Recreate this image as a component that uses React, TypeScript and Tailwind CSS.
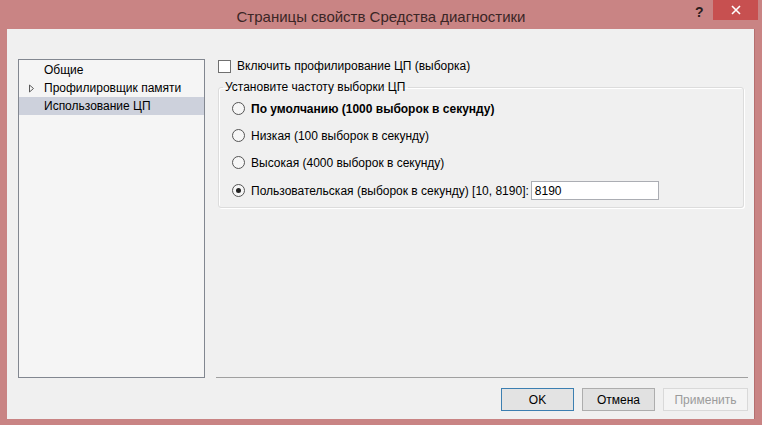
export default function App() {
  const font = { fontFamily: '"Liberation Sans", Arial, sans-serif' };
  return (
    <div
      className="w-[762px] h-[425px] bg-[#c98484] flex flex-col text-[12px] text-black overflow-hidden"
      style={font}
    >
      {/* Title bar */}
      <div className="h-[29px] flex items-start relative shrink-0">
        <div className="flex-1 text-center text-[15px] text-[#3b2626] pt-[6px]">
          Страницы свойств Средства диагностики
        </div>
        <div className="absolute left-[695px] top-[2px] text-[#2b1d1d] font-bold text-[14px]">?</div>
        <div className="absolute right-[4px] top-0 w-[45px] h-[20px] bg-[#c75050] flex items-center justify-center">
          <svg width="10" height="10" viewBox="0 0 10 10">
            <path d="M1 1 L9 9 M9 1 L1 9" stroke="white" strokeWidth="1.6" />
          </svg>
        </div>
      </div>

      {/* Client */}
      <div className="flex-1 mx-[7px] mb-[6px] bg-[#f0f0f0] border-r border-[#b56f6f] flex flex-col">
        <div className="flex pt-[30px] pl-[11px]">
          {/* Tree */}
          <div className="w-[187px] h-[319px] border border-[#828790] bg-[#f5f5f5] pt-[1px] shrink-0">
            <div className="h-[18px] flex items-center pl-[25px]">Общие</div>
            <div className="h-[18px] flex items-center pl-[9px]">
              <svg width="8" height="9" viewBox="0 0 8 9" className="mr-[8px]">
                <path d="M1.5 1 L5.5 4.5 L1.5 8 Z" fill="none" stroke="#595959" strokeWidth="1" />
              </svg>
              Профилировщик памяти
            </div>
            <div className="h-[18px] flex items-center pl-[25px] bg-[#cdd1dc]">Использование ЦП</div>
          </div>

          {/* Right panel */}
          <div className="flex-1 ml-[11px] mr-[6px] h-[319px] border-b border-[#a0a0a0] flex flex-col">
            <div className="flex items-center h-[14px] ml-[2px]">
              <div className="w-[13px] h-[13px] border border-[#707070] bg-white mr-[6px]" />
              <span>Включить профилирование ЦП (выборка)</span>
            </div>

            <fieldset className="mt-[7px] ml-[2px] mr-[4px] border border-[#dcdcdc] rounded-[3px] shadow-[inset_1px_1px_0_#ffffff,1px_1px_0_#ffffff] h-[128px]">
              <legend className="ml-[4px] pl-[2px] pr-[3px] leading-[14px]">Установите частоту выборки ЦП</legend>
              <div className="flex flex-col gap-[12px] mt-[7px] pl-[13px]">
                <Radio label="По умолчанию (1000 выборок в секунду)" bold />
                <Radio label="Низкая (100 выборок в секунду)" />
                <Radio label="Высокая (4000 выборок в секунду)" />
                <div className="flex items-center h-[15px] mt-[1px]">
                  <Circle checked />
                  <span>Пользовательская (выборок в секунду) [10, 8190]:</span>
                  <div className="ml-[2px] w-[128px] h-[19px] border border-[#abadb3] bg-white flex items-center pl-[3px]">
                    8190
                  </div>
                </div>
              </div>
            </fieldset>
          </div>
        </div>

        {/* Buttons */}
        <div className="flex justify-end gap-[8px] pr-[6px] mt-[10px]">
          <button className="w-[73px] h-[23px] border border-[#3c7fb1] bg-[#e3e3e3]">OK</button>
          <button className="w-[73px] h-[23px] border border-[#adadad] bg-[#e1e1e1]">Отмена</button>
          <button className="w-[85px] h-[23px] border border-[#d9d9d9] bg-[#f4f4f4] text-[#9b9b9b]">Применить</button>
        </div>
      </div>
    </div>
  );
}

function Circle({ checked = false }: { checked?: boolean }) {
  return (
    <div className="w-[13px] h-[13px] rounded-full border border-[#555555] bg-[#f6f6f6] mr-[6px] flex items-center justify-center shrink-0">
      {checked && <div className="w-[5px] h-[5px] rounded-full bg-[#222222]" />}
    </div>
  );
}

function Radio({ label, bold = false }: { label: string; bold?: boolean }) {
  return (
    <div className="flex items-center h-[15px]">
      <Circle />
      <span className={bold ? "font-bold" : ""}>{label}</span>
    </div>
  );
}
